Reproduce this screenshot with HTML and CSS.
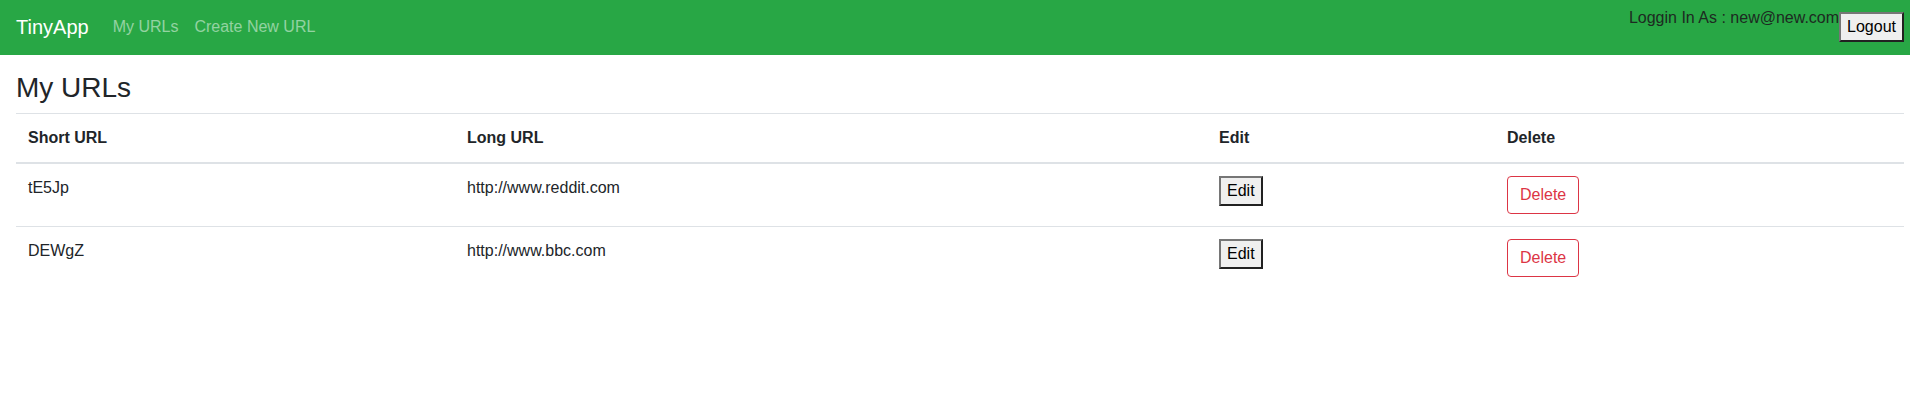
FILE: index.html
```html
<!DOCTYPE html>
<html lang="en">
<head>
<meta charset="utf-8">
<title>TinyApp</title>
<link rel="stylesheet" href="styles.css">
</head>
<body>
<nav class="navbar">
  <div class="nav-left">
    <a class="brand" href="#">TinyApp</a>
    <a class="nav-link" href="#">My URLs</a>
    <a class="nav-link" href="#">Create New URL</a>
  </div>
  <div class="nav-right">
    <span class="login-text">Loggin In As : new@new.com</span>
    <button class="plain-btn logout-btn" type="button">Logout</button>
  </div>
</nav>
<main class="content">
  <h3 class="title">My URLs</h3>
  <table class="url-table">
    <thead>
      <tr>
        <th class="col-short">Short URL</th>
        <th class="col-long">Long URL</th>
        <th class="col-edit">Edit</th>
        <th class="col-delete">Delete</th>
      </tr>
    </thead>
    <tbody>
      <tr>
        <td>tE5Jp</td>
        <td>http://www.reddit.com</td>
        <td><button class="plain-btn" type="button">Edit</button></td>
        <td><button class="delete-btn" type="button">Delete</button></td>
      </tr>
      <tr>
        <td>DEWgZ</td>
        <td>http://www.bbc.com</td>
        <td><button class="plain-btn" type="button">Edit</button></td>
        <td><button class="delete-btn" type="button">Delete</button></td>
      </tr>
    </tbody>
  </table>
</main>
</body>
</html>
```
FILE: styles.css
```css
* { box-sizing: border-box; }

body {
  margin: 0;
  font-family: "Liberation Sans", Arial, sans-serif;
  font-size: 16px;
  line-height: 1.5;
  color: #212529;
  background: #fff;
}

.navbar {
  height: 55px;
  background: #28a745;
  display: flex;
  justify-content: space-between;
  align-items: flex-start;
  padding: 0 6px 0 16px;
}

.nav-left {
  display: flex;
  align-items: flex-start;
  padding-top: 7px;
}

.brand {
  color: #fff;
  font-size: 20px;
  line-height: 30px;
  padding: 5px 0;
  margin-right: 16px;
  text-decoration: none;
}

.nav-link {
  color: rgba(255, 255, 255, 0.5);
  text-decoration: none;
  padding: 8px;
  line-height: 24px;
}

.nav-right {
  display: flex;
  align-items: flex-start;
}

.login-text {
  padding-top: 6px;
  line-height: 24px;
  color: #1d2a21;
  white-space: nowrap;
}

.plain-btn {
  font-family: inherit;
  font-size: 16px;
  line-height: 24px;
  color: #000;
  background: #efefef;
  border: 2px outset #767676;
  border-radius: 0;
  padding: 1px 6px;
  margin: 0;
}

.logout-btn {
  margin-top: 12px;
}

.content {
  padding: 16px 6px 0 16px;
}

.title {
  margin: 0 0 8px;
  font-size: 28px;
  font-weight: 500;
  line-height: 1.2;
}

.url-table {
  width: 1888px;
  border-collapse: collapse;
}

.url-table th,
.url-table td {
  padding: 12px;
  text-align: left;
  border-top: 1px solid #dee2e6;
  vertical-align: top;
}

.url-table th {
  font-weight: 700;
  vertical-align: bottom;
  border-bottom: 2px solid #dee2e6;
}

.col-short { width: 439px; }
.col-long { width: 752px; }
.col-edit { width: 288px; }
.col-delete { width: 409px; }

.delete-btn {
  font-family: inherit;
  font-size: 16px;
  line-height: 24px;
  color: #dc3545;
  background: transparent;
  border: 1px solid #dc3545;
  border-radius: 4px;
  padding: 6px 12px;
  margin: 0;
}
```
